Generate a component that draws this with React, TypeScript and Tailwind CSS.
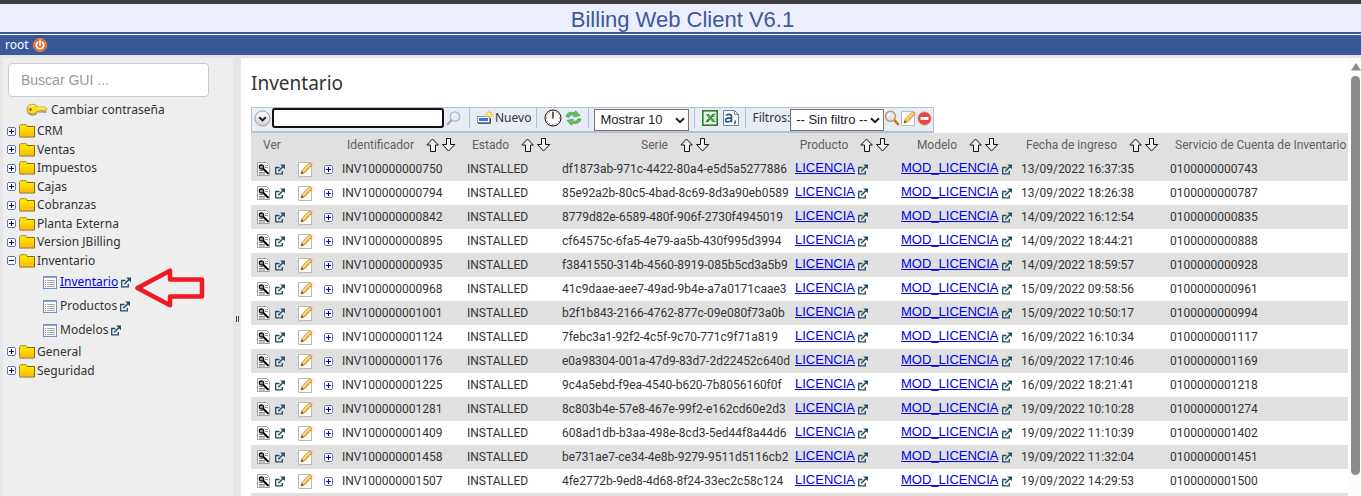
import { useState } from "react";
import type { ReactNode } from "react";

const folders = [
  "CRM",
  "Ventas",
  "Impuestos",
  "Cajas",
  "Cobranzas",
  "Planta Externa",
  "Version JBilling",
  "Inventario",
];

const inventoryPages = ["Inventario", "Productos", "Modelos"];

const items = [
  ["INV100000000750", "df1873ab-971c-4422-80a4-e5d5a5277886", "13/09/2022 16:37:35", "0100000000743"],
  ["INV100000000794", "85e92a2b-80c5-4bad-8c69-8d3a90eb0589", "13/09/2022 18:26:38", "0100000000787"],
  ["INV100000000842", "8779d82e-6589-480f-906f-2730f4945019", "14/09/2022 16:12:54", "0100000000835"],
  ["INV100000000895", "cf64575c-6fa5-4e79-aa5b-430f995d3994", "14/09/2022 18:44:21", "0100000000888"],
  ["INV100000000935", "f3841550-314b-4560-8919-085b5cd3a5b9", "14/09/2022 18:59:57", "0100000000928"],
  ["INV100000000968", "41c9daae-aee7-49ad-9b4e-a7a0171caae3", "15/09/2022 09:58:56", "0100000000961"],
  ["INV100000001001", "b2f1b843-2166-4762-877c-09e080f73a0b", "15/09/2022 10:50:17", "0100000000994"],
  ["INV100000001124", "7febc3a1-92f2-4c5f-9c70-771c9f71a819", "16/09/2022 16:10:34", "0100000001117"],
  ["INV100000001176", "e0a98304-001a-47d9-83d7-2d22452c640d", "16/09/2022 17:10:46", "0100000001169"],
  ["INV100000001225", "9c4a5ebd-f9ea-4540-b620-7b8056160f0f", "16/09/2022 18:21:41", "0100000001218"],
  ["INV100000001281", "8c803b4e-57e8-467e-99f2-e162cd60e2d3", "19/09/2022 10:10:28", "0100000001274"],
  ["INV100000001409", "608ad1db-b3aa-498e-8cd3-5ed44f8a44d6", "19/09/2022 11:10:39", "0100000001402"],
  ["INV100000001458", "be731ae7-ce34-4e8b-9279-9511d5116cb2", "19/09/2022 11:32:04", "0100000001451"],
  ["INV100000001507", "4fe2772b-9ed8-4d68-8f24-33ec2c58c124", "19/09/2022 14:29:53", "0100000001500"],
];

function PowerIcon() {
  return (
    <svg width="14" height="14" viewBox="0 0 14 14" fill="none">
      <circle cx="7" cy="7" r="6.5" fill="#e2641c" stroke="#f08a4a" />
      <path d="M4.6 4.2a3.7 3.7 0 1 0 4.8 0" stroke="#fff" strokeWidth="1.8" strokeLinecap="round" />
      <path d="M7 2.4v4.8" stroke="#fff" strokeWidth="1.8" strokeLinecap="round" />
    </svg>
  );
}

function KeyIcon() {
  return (
    <svg width="22" height="14" viewBox="0 0 22 14">
      <path d="M1 8.500c1 4.500 6.500 5.500 9.500 3l1-2 9 .5v-2" fill="#8d8d8d" opacity=".8" />
      <path
        d="M6 1.200c3 0 4.600 1.100 5.300 2.800H19l2.200 2-1.700 2h-1.300l-1-.8-1.300 1-1.200-.8-1 .8h-2.400c-.9 1.900-2.600 2.800-5.300 2.800-3 0-5-2-5-4.900s2-4.900 5-4.900z"
        fill="#f7dc1e"
        stroke="#a98705"
        strokeWidth=".7"
      />
      <path d="M3 4c1-1.400 4-1.800 5.500-.8M11 5h8" stroke="#fff49b" strokeWidth="1.200" fill="none" />
      <circle cx="4.500" cy="6.500" r="1.200" fill="#6b5a12" />
    </svg>
  );
}

function FolderIcon() {
  return (
    <svg width="16" height="14" viewBox="0 0 16 14">
      <defs>
        <linearGradient id="folder" x1="0" y1="0" x2="0" y2="1">
          <stop offset="0" stopColor="#fff000" />
          <stop offset="1" stopColor="#ffb800" />
        </linearGradient>
      </defs>
      <path d="M.5 12.500V2l1-1.500h6L9 2.500h6.500v10z" fill="url(#folder)" />
      <path d="M.5 12.500V2l1-1.300h5.700L8.500 2.500" fill="none" stroke="#a08a4a" />
      <path d="M8 2.500h7.500v10.500" fill="none" stroke="#7d6b12" />
      <path d="M.5 13h15" stroke="#8a6a00" />
    </svg>
  );
}

function ToggleIcon({ open = false }: { open?: boolean }) {
  return (
    <svg width="9" height="9" viewBox="0 0 9 9" shapeRendering="crispEdges" fill="none">
      <rect x=".5" y=".5" width="8" height="8" fill="#fff" />
      <path d="M1 .5h7M1 8.500h7M.5 1v7M8.500 1v7" stroke="#6575b4" />
      <path d="M2 4.500h5" stroke="#0000a8" />
      {!open && <path d="M4.500 2v5" stroke="#0000a8" />}
    </svg>
  );
}

function PageIcon() {
  return (
    <svg width="14" height="13" viewBox="0 0 14 13" fill="none" shapeRendering="crispEdges">
      <rect x=".5" y=".5" width="13" height="12" fill="#fff" stroke="#6f8fbd" />
      <path d="M1 1.500h12" stroke="#7fa8e0" />
      <path d="M2 4.500h1M2 6.500h1M2 8.500h1M2 10.500h1" stroke="#c8643c" />
      <path d="M4 4.500h8M4 6.500h8M4 8.500h8M4 10.500h8" stroke="#a9a9a9" />
    </svg>
  );
}

function ExternalIcon() {
  return (
    <svg width="10" height="11" viewBox="0 0 10 11" fill="none" stroke="#1d4f63">
      <path d="M4.500 3.500H.7v6.300h6.600V7" strokeWidth="1.300" />
      <path d="M3.300 7.300 8 2.500" strokeWidth="1.500" />
      <path d="M5.200.5H10v4.800z" fill="#1d4f63" stroke="none" />
    </svg>
  );
}

function ViewIcon() {
  return (
    <svg width="13" height="14" viewBox="0 0 13 14" fill="none">
      <path d="M.5.5h9l3 3v10H.5z" fill="#fff" stroke="#a5a5a5" />
      <path d="M2 3.500h3M8 3.500h3M8 5.500h3M2 8.500h4M2 10.500h6M2 12h6" stroke="#8b8b8b" />
      <circle cx="4.500" cy="5" r="2.200" fill="#999" stroke="#000" strokeWidth="1.200" />
      <path d="m6 6.500 5.500 5.500" stroke="#000" strokeWidth="2" />
    </svg>
  );
}

function EditIcon() {
  return (
    <svg width="15" height="15" viewBox="0 0 15 15" fill="none">
      <path d="M.5.5h12l1 1v13H.5z" fill="#fff" stroke="#b9b9b9" />
      <path d="m3 12 1-3.600L11 1.200c1-.8 3.400 1.200 2.600 2.400L6.500 11z" fill="#f6b73c" stroke="#c98a2b" strokeWidth=".8" />
      <path d="m5 9 7-7" stroke="#ffe39a" strokeWidth="1.100" />
      <path d="m11 1.200 2.700 2.500 1-1.400L12.400.4z" fill="#f0a070" />
      <path d="m3 12 .7-2.600 2 1.900z" fill="#5c4420" />
    </svg>
  );
}

function SortArrows() {
  return (
    <svg width="30" height="14" viewBox="0 0 30 14" fill="#fff" fillOpacity=".5" stroke="#111">
      <path d="M6.500 1 12.300 7H9.500V13.500H4.500V7H.8z" />
      <path d="M20.500.5h4V6.500h4.300L22.500 13 16.500 6.500h4z" />
    </svg>
  );
}

function SearchIcon() {
  return (
    <svg width="15" height="15" viewBox="0 0 15 15" fill="none">
      <circle cx="9" cy="5.500" r="4.700" fill="#dcecfa" stroke="#a3b2c6" strokeWidth="1.300" />
      <path d="M6.500 5a2.600 2.600 0 0 1 3-2.200" stroke="#fff" strokeWidth="1.200" />
      <path d="M5.500 9.200 1 13.800" stroke="#a8a8a8" strokeWidth="2.200" />
    </svg>
  );
}

function FilterSearchIcon() {
  return (
    <svg width="16" height="16" viewBox="0 0 16 16" fill="none">
      <circle cx="6.500" cy="6.300" r="5" fill="#d8ebf9" stroke="#c99a5a" strokeWidth="1.600" />
      <path d="M3.800 6a2.800 2.800 0 0 1 3-2.500" stroke="#fff" strokeWidth="1.200" />
      <path d="m10.300 10.200 4.500 4.600" stroke="#b5793a" strokeWidth="2.400" />
    </svg>
  );
}

function DropIcon() {
  return (
    <svg width="17" height="17" viewBox="0 0 17 17" fill="none">
      <defs>
        <linearGradient id="drop" x1="0" y1="0" x2="0" y2="1">
          <stop offset="0" stopColor="#fff" />
          <stop offset="1" stopColor="#cfcfcf" />
        </linearGradient>
      </defs>
      <circle cx="8.500" cy="8.500" r="7.500" fill="url(#drop)" stroke="#9c9c9c" />
      <path d="m5.200 7.200 3.300 3.100 3.300-3.100" stroke="#222" strokeWidth="2" />
    </svg>
  );
}

function NewIcon() {
  return (
    <svg width="17" height="16" viewBox="0 0 17 16" fill="none">
      <rect x=".5" y="6.500" width="12" height="6" fill="#fff" stroke="#7b93c0" />
      <path d="M1 13.300h12.500V8" stroke="#33415f" />
      <path d="M2 9.500h9" stroke="#3c78d8" strokeWidth="3" />
      <path d="M12 .5v8M8 4.500h8M9.300 1.800l5.400 5.400M14.700 1.800 9.300 7.200" stroke="#f3c623" strokeWidth="1.200" />
      <circle cx="12" cy="4.500" r="1.700" fill="#fff6a8" />
    </svg>
  );
}

function ClockIcon() {
  return (
    <svg width="18" height="18" viewBox="0 0 18 18" fill="none">
      <circle cx="9" cy="9" r="8" fill="#fff" stroke="#111" />
      <path d="M9 3v6.500" stroke="#111" strokeWidth="1.300" />
      <path
        d="M9 1.800v1.200M9 15v1.200M1.800 9H3M15 9h1.200M5.300 2.900l.5.900M12.700 2.900l-.5.9M2.900 5.300l.9.500M15.100 5.300l-.9.500M2.900 12.700l.9-.5M15.100 12.700l-.9-.5M5.300 15.100l.5-.9M12.700 15.100l-.5-.9"
        stroke="#d03030"
        strokeWidth=".9"
      />
    </svg>
  );
}

function RefreshIcon() {
  return (
    <svg width="17" height="16" viewBox="0 0 17 16" fill="#6cbf63" stroke="#3b8f3a" strokeWidth=".6">
      <path d="M1 6.800C1.500 3 5.500 1.300 9.500 2.800L10.500.8l4.500 4.700-6.300 1.500.8-1.800C6.800 4.500 5 5 4 7.300z" />
      <path d="M16 9c-.5 3.800-4.500 5.500-8.500 4L6.500 15.300 2 10.500l6.300-1.500-.8 1.900c2.700.7 4.500.1 5.500-2.200z" />
    </svg>
  );
}

function ExcelIcon() {
  return (
    <svg width="16" height="16" viewBox="0 0 16 16" fill="none">
      <rect x=".8" y=".8" width="14.400" height="14.400" fill="#e9f5e4" stroke="#2f7d32" strokeWidth="1.600" />
      <path d="M11 4h3M11 6.500h3M11 9h3M11 11.500h3" stroke="#8cc48a" />
      <path d="m3.500 4 3.200 0 1.800 2.600L10.300 4h3L10 8l3.500 4h-3.200L8.300 9.500 6.500 12h-3.300L6.700 8z" fill="#2e8b36" />
      <path d="m4.500 4.500 6.500 7" stroke="#a8d8a4" strokeWidth=".8" />
    </svg>
  );
}

function CsvIcon() {
  return (
    <svg width="16" height="16" viewBox="0 0 16 16" fill="none">
      <path d="M.5.5h11l4 4v11H.5z" fill="#fff" stroke="#6a83ad" />
      <path d="M11.500.5v4h4" stroke="#6a83ad" />
      <path d="M3 5.700C4 3.700 8.500 3.700 8.500 6.500v5.700M8.500 7.800C5.500 7.800 2.500 8 2.500 10.200c0 2.500 4.500 2.300 6-.4" stroke="#2d5590" strokeWidth="1.700" />
      <path d="M12.300 10.500v1.800l-1.200 1.700" stroke="#2d5590" strokeWidth="1.500" />
    </svg>
  );
}

function RemoveIcon() {
  return (
    <svg width="15" height="15" viewBox="0 0 15 15">
      <circle cx="7.500" cy="7.500" r="6.500" fill="#e2483d" stroke="#ee8077" />
      <rect x="3.500" y="6" width="8" height="3" rx=".5" fill="#fff" />
    </svg>
  );
}

function RedArrow() {
  return (
    <svg
      className="pointer-events-none absolute -top-0.5 left-[127px]"
      width="71"
      height="40"
      viewBox="0 0 71 40"
      fill="none"
    >
      <path
        d="M3.500 20 36 2.700V11.500H68V28.500H36V37.300z"
        stroke="#ed1c24"
        strokeWidth="4.500"
        strokeLinejoin="round"
      />
    </svg>
  );
}

function TreeFolder({ name, open = false }: { name: string; open?: boolean }) {
  return (
    <button
      type="button"
      aria-expanded={open}
      className="flex flex-1 items-center text-left"
    >
      <ToggleIcon open={open} />
      <span className="mr-0.5 ml-[3px]">
        <FolderIcon />
      </span>
      {name}
    </button>
  );
}

function Group({ children, last = false }: { children: ReactNode; last?: boolean }) {
  return (
    <div
      className={
        last
          ? "flex h-5 items-center"
          : "flex h-5 items-center border-r border-[#b5c0d8]"
      }
    >
      {children}
    </div>
  );
}

function SelectBox({
  label,
  value,
  className,
}: {
  label: string;
  value: string;
  className: string;
}) {
  return (
    <div className={`relative mt-1 ${className}`}>
      <select
        aria-label={label}
        className="block h-[22px] w-full appearance-none border border-[#767676] bg-white pl-[5px] font-['Liberation_Sans',sans-serif] text-[13px] text-[#222]"
      >
        <option>{value}</option>
      </select>
      <svg
        className="pointer-events-none absolute top-2 right-1"
        width="10"
        height="7"
        viewBox="0 0 10 7"
        fill="none"
      >
        <path d="m1 1.200 4 4 4-4" stroke="#222" strokeWidth="2" />
      </svg>
    </div>
  );
}

function SortHeader({ children }: { children: ReactNode }) {
  return (
    <th className="font-normal">
      <div className="flex items-center justify-center gap-3">
        {children}
        <SortArrows />
      </div>
    </th>
  );
}

function CellLink({ children }: { children: string }) {
  return (
    <td className="pl-[3px]">
      <a
        href="#"
        className="flex items-center gap-[3px] font-['Liberation_Sans',sans-serif] text-[13px] text-[#0000ee]"
      >
        <span className="pb-0.5 underline">{children}</span>
        <ExternalIcon />
      </a>
    </td>
  );
}

function Sidebar() {
  return (
    <aside className="ml-[3px] w-[230px] shrink-0 bg-[#eeeeee] px-1 pt-[5px] text-[12px] text-[#333]">
      <input
        type="text"
        aria-label="Buscar GUI"
        placeholder="Buscar GUI ..."
        className="ml-px h-[34px] w-[201px] rounded border border-[#ccc] bg-white px-3 font-['Liberation_Sans',sans-serif] text-sm placeholder:text-[#999]"
      />
      <a href="#" className="ml-[19px] flex h-[25px] items-center gap-[3px]">
        <KeyIcon />
        Cambiar contraseña
      </a>
      <nav>
        <div className="flex h-[148px] flex-col">
          {folders.map((name) => (
            <TreeFolder key={name} name={name} open={name === "Inventario"} />
          ))}
        </div>
        <div className="relative">
          {inventoryPages.map((name) => (
            <a
              key={name}
              href="#"
              className="ml-9 flex h-6 items-center gap-[3px]"
            >
              <PageIcon />
              <span className={name === "Inventario" ? "text-[#0000ee] underline" : ""}>
                {name}
              </span>
              <ExternalIcon />
            </a>
          ))}
          <RedArrow />
        </div>
        <div className="flex h-[38px] flex-col">
          <TreeFolder name="General" />
          <TreeFolder name="Seguridad" />
        </div>
      </nav>
    </aside>
  );
}

function Toolbar() {
  const [query, setQuery] = useState("");

  return (
    <div className="flex h-[26px] w-fit items-start border border-b-2 border-[#b5c0d8] bg-[#e8ecf5] font-['Noto_Sans',sans-serif] text-[12px] text-[#333]">
      <Group>
        <button type="button" aria-label="Opciones" className="mr-px ml-0.5">
          <DropIcon />
        </button>
        <input
          type="text"
          aria-label="Buscar"
          value={query}
          onChange={(e) => setQuery(e.target.value)}
          className="h-5 w-[172px] rounded-[3px] border-2 border-[#111] bg-white px-1 outline-none"
        />
        <button type="button" aria-label="Buscar" className="mr-2 ml-0.5">
          <SearchIcon />
        </button>
      </Group>
      <Group>
        <button type="button" className="mr-[5px] ml-[7px] flex items-center gap-px">
          <NewIcon />
          Nuevo
        </button>
      </Group>
      <Group>
        <button type="button" aria-label="Programar" className="ml-[7px]">
          <ClockIcon />
        </button>
        <button type="button" aria-label="Actualizar" className="mr-1.5 ml-[3px]">
          <RefreshIcon />
        </button>
      </Group>
      <Group>
        <SelectBox label="Mostrar" value="Mostrar 10" className="mr-[5px] ml-[5px] w-[95px]" />
      </Group>
      <Group>
        <button type="button" aria-label="Exportar a Excel" className="ml-[7px]">
          <ExcelIcon />
        </button>
        <button type="button" aria-label="Exportar a CSV" className="mr-1.5 ml-[5px]">
          <CsvIcon />
        </button>
      </Group>
      <Group last>
        <span className="ml-1.5">Filtros:</span>
        <SelectBox label="Filtros" value="-- Sin filtro --" className="w-[94px]" />
        <button type="button" aria-label="Buscar filtro">
          <FilterSearchIcon />
        </button>
        <button type="button" aria-label="Editar filtro" className="ml-px">
          <EditIcon />
        </button>
        <button type="button" aria-label="Quitar filtro" className="mr-px ml-px">
          <RemoveIcon />
        </button>
      </Group>
    </div>
  );
}

function InventoryTable() {
  return (
    <table className="w-full table-fixed text-left text-[12px] whitespace-nowrap text-[#333]">
      <colgroup>
        <col className="w-[45px]" />
        <col className="w-[25px]" />
        <col className="w-[18px]" />
        <col className="w-[125px]" />
        <col className="w-[95px]" />
        <col className="w-[233px]" />
        <col className="w-[106px]" />
        <col className="w-[120px]" />
        <col className="w-[149px]" />
        <col />
      </colgroup>
      <thead>
        <tr className="h-6 bg-[#e0e0e0] text-[#606060]">
          <th className="pl-3 font-normal">Ver</th>
          <th />
          <th />
          <SortHeader>Identificador</SortHeader>
          <SortHeader>Estado</SortHeader>
          <SortHeader>Serie</SortHeader>
          <SortHeader>Producto</SortHeader>
          <SortHeader>Modelo</SortHeader>
          <SortHeader>Fecha de ingreso</SortHeader>
          <th className="overflow-hidden pl-2 font-normal">Servicio de Cuenta de Inventario</th>
        </tr>
      </thead>
      <tbody>
        {items.map(([id, serie, date, service]) => (
          <tr key={id} className="h-6 odd:bg-[#e0e0e0]">
            <td className="pl-1.5">
              <div className="flex items-center gap-[5px]">
                <ViewIcon />
                <ExternalIcon />
              </div>
            </td>
            <td className="pl-0.5">
              <button type="button" aria-label={`Editar ${id}`} className="block">
                <EditIcon />
              </button>
            </td>
            <td className="pl-[3px]">
              <button type="button" aria-label={`Expandir ${id}`} className="block">
                <ToggleIcon />
              </button>
            </td>
            <td className="pl-[3px]">{id}</td>
            <td className="pl-[3px]">INSTALLED</td>
            <td className="pl-[3px]">{serie}</td>
            <CellLink>LICENCIA</CellLink>
            <CellLink>MOD_LICENCIA</CellLink>
            <td className="pl-[3px]">{date}</td>
            <td className="pl-[3px]">{service}</td>
          </tr>
        ))}
        <tr className="h-6 odd:bg-[#e0e0e0]">
          <td colSpan={10} />
        </tr>
      </tbody>
    </table>
  );
}

export default function App() {
  return (
    <div className="flex h-screen flex-col overflow-hidden bg-[#e6e6e6] font-['Noto_Sans',sans-serif]">
      <header className="shrink-0">
        <div className="border-t-4 border-b-2 border-t-[#3c3c3c] border-b-[#3b5998] bg-[#eceeff] pl-1 text-center">
          <h1 className="h-7 font-['Liberation_Sans',sans-serif] text-[22px] leading-8 text-[#3b5998]">
            Billing Web Client V6.1
          </h1>
        </div>
        <div className="mb-[3px] flex h-[21px] items-center gap-1 border-t border-white bg-[#3b5998] pl-[5px] text-[12px] text-white">
          root
          <button type="button" aria-label="Salir">
            <PowerIcon />
          </button>
        </div>
      </header>

      <div className="flex min-h-0 flex-1">
        <Sidebar />
        <div className="flex w-2 shrink-0 items-center justify-center gap-px pt-[84px]">
          <span className="h-1.5 w-px bg-[#444]" />
          <span className="h-1.5 w-px bg-[#444]" />
        </div>
        <main className="min-w-0 flex-1 overflow-hidden bg-white pl-2.5 font-['Roboto',sans-serif]">
          <h2 className="h-[49px] font-['Noto_Sans',sans-serif] text-[19px] leading-[50px] text-[#333]">
            Inventario
          </h2>
          <Toolbar />
          <InventoryTable />
        </main>
        <div className="flex w-[13px] shrink-0 flex-col items-end bg-[#fcfcfc] pt-[5px]">
          <svg width="10" height="8" viewBox="0 0 10 8">
            <path d="M5 0 10 7.500H0z" fill="#8b8b8b" />
          </svg>
          <span className="mt-[5px] mr-px mb-[21px] w-[9px] flex-1 rounded-full bg-[#8b8b8b]" />
        </div>
      </div>
    </div>
  );
}
